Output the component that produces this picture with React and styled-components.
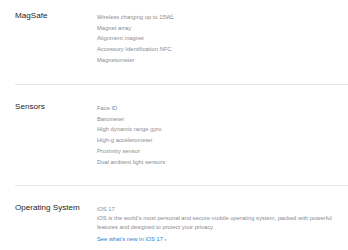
import React from "react";
import styled, { createGlobalStyle } from "styled-components";

const Global = createGlobalStyle`
  html, body { margin: 0; padding: 0; background: #fff; }
  body { font-family: "Liberation Sans", Arial, sans-serif; overflow: hidden; }
`;

const Page = styled.main`
  padding-left: 15px;
  width: 333px;
`;

const Section = styled.section`
  display: grid;
  grid-template-columns: 82px 240px;
  align-items: start;
  padding: ${(p) => (p.$first ? "10.5px" : "17px")} 0 18px;
  border-bottom: ${(p) => (p.$last ? "none" : "1px solid #e6e6e9")};
`;

const Title = styled.h2`
  margin: 0;
  font-size: 8.1px;
  line-height: 10px;
  font-weight: 400;
  color: #1d1d1f;
`;

const List = styled.ul`
  list-style: none;
  margin: 1.5px 0 0;
  padding: 0;
`;

const Item = styled.li`
  font-size: 5.8px;
  line-height: 10.7px;
  color: #8a8a90;
  white-space: nowrap;
`;

const Sup = styled.sup`
  font-size: 4px;
  line-height: 0;
  text-decoration: underline;
  vertical-align: 2px;
`;

const Body = styled.div`
  margin-top: 1.5px;
  font-size: 5.8px;
  line-height: 9px;
  color: #8a8a90;
`;

const Para = styled.p`
  margin: 0;
`;

const Link = styled.a`
  display: inline-block;
  margin-top: 3px;
  color: #2a7fd4;
  text-decoration: none;
`;

const sections = [
  {
    title: "MagSafe",
    items: [
      <>Wireless charging up to 15W<Sup>‡</Sup></>,
      "Magnet array",
      "Alignment magnet",
      "Accessory Identification NFC",
      "Magnetometer",
    ],
  },
  {
    title: "Sensors",
    items: [
      "Face ID",
      "Barometer",
      "High dynamic range gyro",
      "High-g accelerometer",
      "Proximity sensor",
      "Dual ambient light sensors",
    ],
  },
];

export default function App() {
  return (
    <>
      <Global />
      <Page>
        {sections.map((s, i) => (
          <Section key={s.title} $first={i === 0}>
            <Title>{s.title}</Title>
            <List>
              {s.items.map((it, j) => (
                <Item key={j}>{it}</Item>
              ))}
            </List>
          </Section>
        ))}
        <Section $last>
          <Title>Operating System</Title>
          <Body>
            <Para>iOS 17</Para>
            <Para>
              iOS is the world’s most personal and secure mobile operating system, packed with powerful features and designed to protect your privacy.
            </Para>
            <Link href="#">See what’s new in iOS 17 ›</Link>
          </Body>
        </Section>
      </Page>
    </>
  );
}
